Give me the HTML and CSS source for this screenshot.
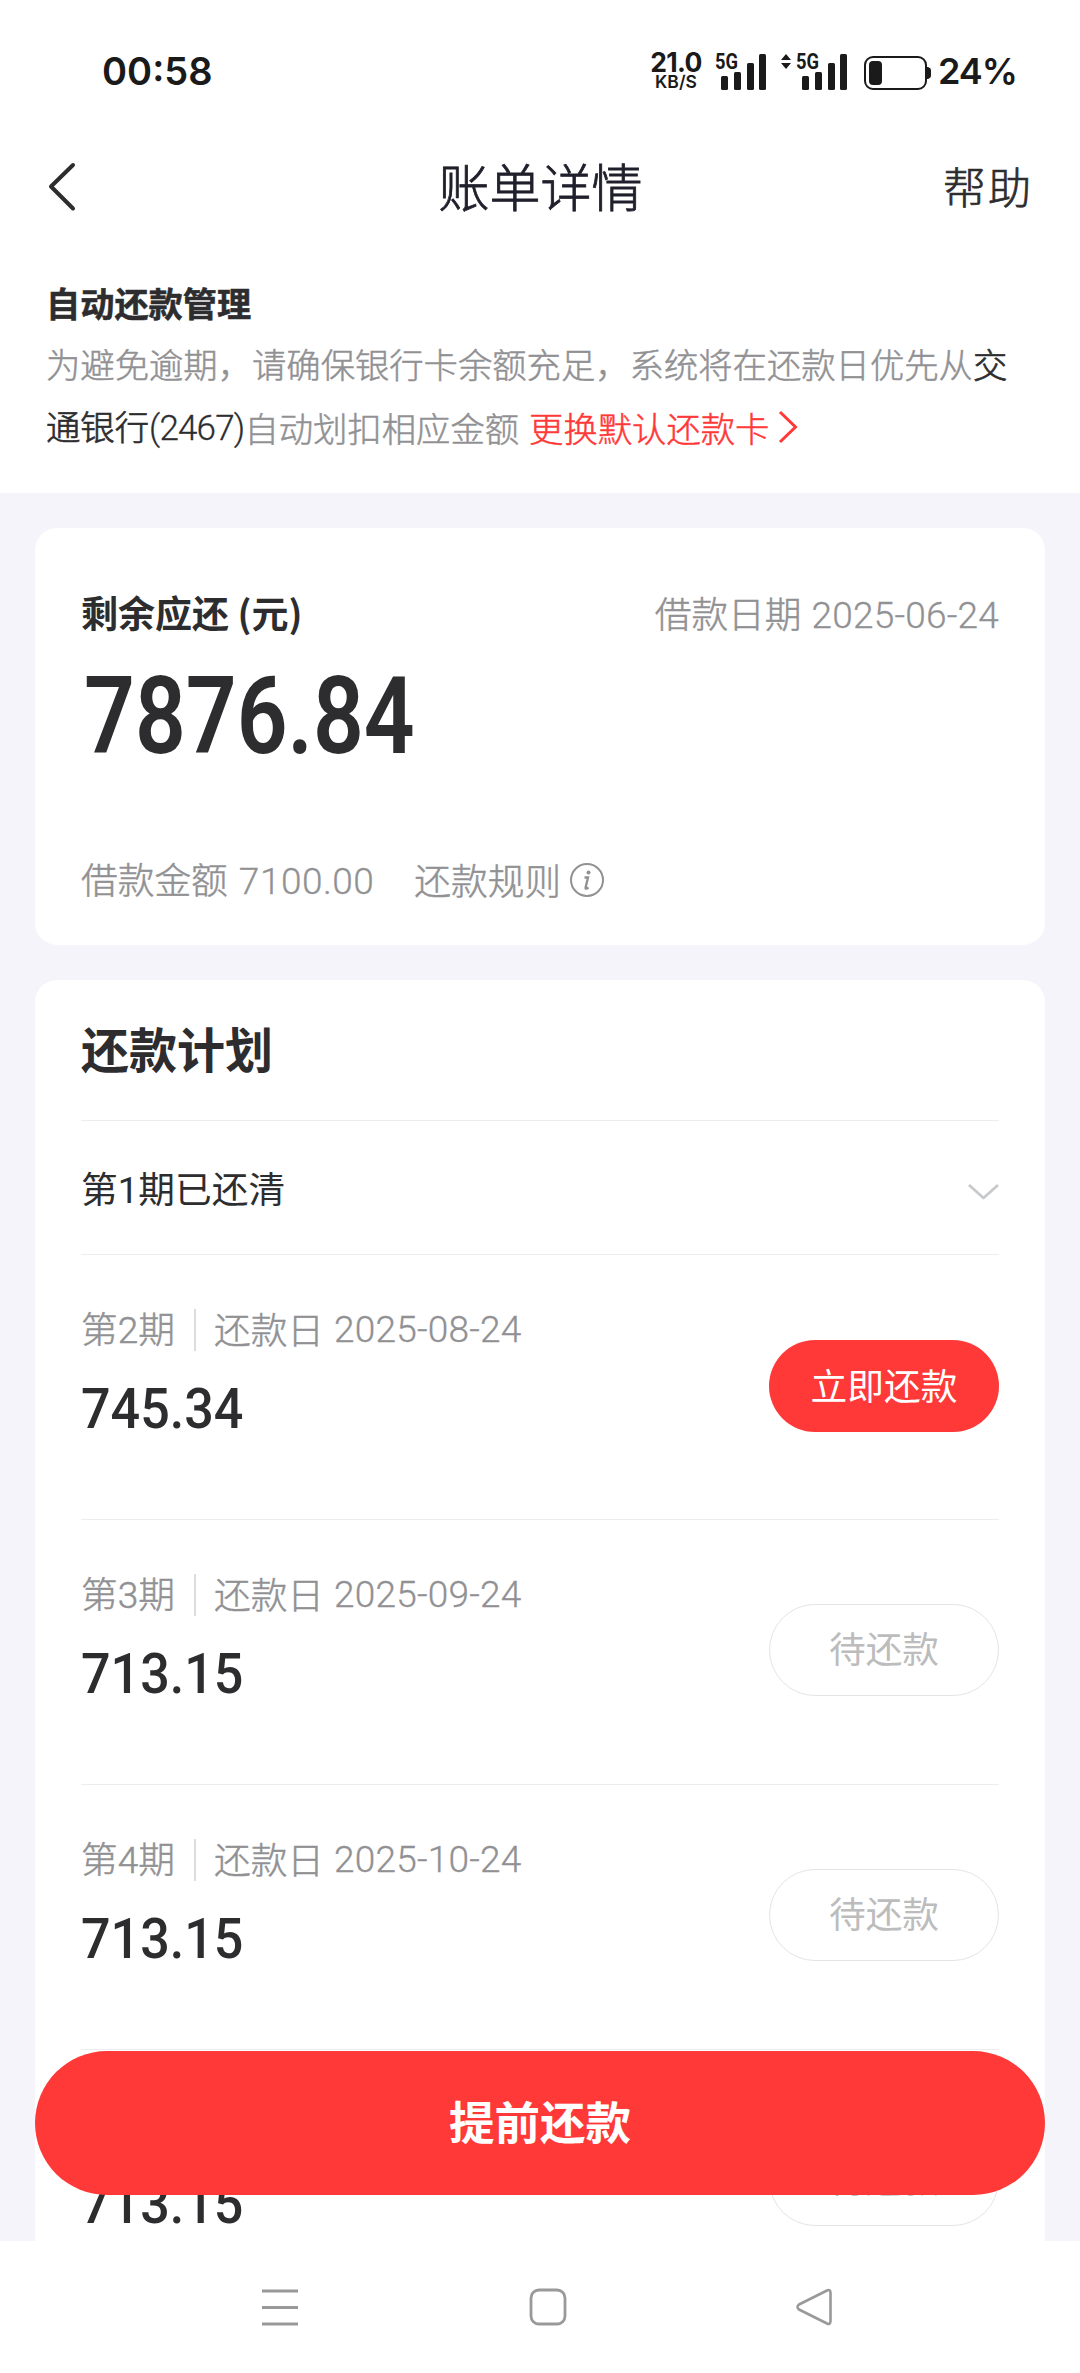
FILE: index.html
```html
<!DOCTYPE html>
<html lang="zh-CN">
<head>
	<meta charset="UTF-8">
	<meta name="viewport" content="width=device-width, initial-scale=1.0">
	<title>账单详情</title>
	<link rel="stylesheet" href="styles.css">
</head>
<body>
	<div class="page">
		<!-- 状态栏 -->
		<div class="status">
			<span class="time">00:58</span>
			<div class="status-right">
				<div class="speed">
					<span class="speed-num">21.0</span>
					<span class="speed-unit">KB/S</span>
				</div>
				<svg class="signal" width="52" height="40" viewBox="0 0 52 40">
					<text x="0" y="17.500" textLength="23" lengthAdjust="spacingAndGlyphs">5G</text>
					<rect x="6" y="25" width="7" height="14" rx="1.5"/>
					<rect x="19" y="21" width="7" height="18" rx="1.5"/>
					<rect x="32" y="12" width="7" height="27" rx="1.5"/>
					<rect x="44" y="3" width="7" height="36" rx="1.5"/>
				</svg>
				<svg class="signal signal2" width="67" height="40" viewBox="-15 0 67 40">
					<path d="M-15 9l5-6 5 6zM-15 12l5 6 5-6z"/>
					<text x="0" y="17.500" textLength="23" lengthAdjust="spacingAndGlyphs">5G</text>
					<rect x="6" y="25" width="7" height="14" rx="1.5"/>
					<rect x="19" y="21" width="7" height="18" rx="1.5"/>
					<rect x="32" y="12" width="7" height="27" rx="1.5"/>
					<rect x="44" y="3" width="7" height="36" rx="1.5"/>
				</svg>
				<svg class="battery" width="68" height="34" viewBox="0 0 68 34">
					<rect x="1" y="1" width="61" height="32" rx="8" fill="none" stroke="#1a1a1a" stroke-width="2"/>
					<rect x="5" y="5" width="13" height="24" rx="4"/>
					<path d="M62 11h2q3 1 3 3v6q0 2-3 3h-2z"/>
				</svg>
				<span class="percent">24%</span>
			</div>
		</div>

		<!-- 导航 -->
		<div class="nav">
			<a class="back" href="#">
				<svg width="28" height="50" viewBox="0 0 28 50"><path d="M25 3L3 24.500L25 46.500" fill="none" stroke="#2d2d2f" stroke-width="4" stroke-linecap="round" stroke-linejoin="round"/></svg>
			</a>
			<h1>账单详情</h1>
			<a class="help" href="#">帮助</a>
		</div>

		<!-- 自动还款 -->
		<div class="notice">
			<h2>自动还款管理</h2>
			<p>为避免逾期，请确保银行卡余额充足，系统将在还款日优先从<b>交</b></p>
			<p><b>通银行<span class="tail">(2467)</span></b>自动划扣相应金额<a class="change" href="#">更换默认还款卡<svg width="20" height="34" viewBox="0 0 20 34"><path d="M2 2L17.500 17L2 32" fill="none" stroke="#ff3838" stroke-width="3"/></svg></a></p>
		</div>

		<div class="main">
			<div class="card summary">
				<div class="summary-top">
					<span class="label">剩余应还 (元)</span>
					<span class="date">借款日期 <span class="num">2025-06-24</span></span>
				</div>
				<div class="total"><span>7876.84</span></div>
				<div class="summary-bottom">
					<span class="loan">借款金额 <span class="num">7100.00</span></span>
					<span class="rule">还款规则</span>
					<svg width="34" height="34" viewBox="0 0 34 34"><circle cx="17" cy="17" r="16" fill="none" stroke="#919194" stroke-width="2"/><circle cx="18.500" cy="9.500" r="2" fill="#919194"/><path d="M14.500 14.500h3.500l-2.500 10.500q0 1.500 3-.5" fill="none" stroke="#919194" stroke-width="2.300"/></svg>
				</div>
			</div>

			<div class="card plan">
				<h3>还款计划</h3>
				<div class="cleared">
					<span>第<i>1</i>期已还清</span>
					<svg width="32" height="18" viewBox="0 0 32 18"><path d="M2 2l14.500 13L31 2" fill="none" stroke="#c8c9cc" stroke-width="2.800" stroke-linejoin="round"/></svg>
				</div>
				<div class="item">
					<div class="info">
						<div class="term"><span class="no">第<i>2</i>期</span><span class="day">还款日</span><span class="num">2025-08-24</span></div>
						<div class="money">745.34</div>
					</div>
					<a class="btn pay" href="#">立即还款</a>
				</div>
				<div class="item">
					<div class="info">
						<div class="term"><span class="no">第<i>3</i>期</span><span class="day">还款日</span><span class="num">2025-09-24</span></div>
						<div class="money">713.15</div>
					</div>
					<a class="btn wait" href="#">待还款</a>
				</div>
				<div class="item">
					<div class="info">
						<div class="term"><span class="no">第<i>4</i>期</span><span class="day">还款日</span><span class="num">2025-10-24</span></div>
						<div class="money">713.15</div>
					</div>
					<a class="btn wait" href="#">待还款</a>
				</div>
				<div class="item">
					<div class="info">
						<div class="term"></div>
						<div class="money">713.15</div>
					</div>
					<a class="btn wait" href="#">待还款</a>
				</div>
			</div>
			<a class="prepay" href="#">提前还款</a>
		</div>

		<!-- 系统按键 -->
		<div class="keys">
			<svg width="36" height="38" viewBox="0 0 36 38"><path d="M0 3h36M0 19.500h36M0 36h36" stroke="#999" stroke-width="3"/></svg>
			<svg class="home" width="38" height="38" viewBox="0 0 38 38"><rect x="2" y="2" width="34" height="34" rx="8" fill="none" stroke="#999" stroke-width="2.800"/></svg>
			<svg width="38" height="38" viewBox="0 0 38 38"><path d="M32 2.500Q35.500 1 35.500 5V33Q35.500 37 32 35.500L4 21.500Q1 19 4 16.500Z" fill="none" stroke="#999" stroke-width="2.600" stroke-linejoin="round"/></svg>
		</div>
	</div>
</body>
</html>
```

FILE: styles.css
```css
*{
	padding: 0;
	margin: 0;
	box-sizing: border-box;
}
a{
	text-decoration: none;
	color: inherit;
}
i{
	font-style: normal;
}
svg{
	display: block;
	flex: none;
}
body{
	font-family: "Noto Sans CJK SC", sans-serif;
	color: #2d2d2f;
	background: #fff;
}
.page{
	width: 1080px;
	height: 2373px;
	display: flex;
	flex-direction: column;
	overflow: hidden;
	white-space: nowrap;
}
/* 状态栏 */
.status{
	height: 142px;
	padding: 0 66px 0 102px;
	display: flex;
	justify-content: space-between;
	align-items: center;
	font-family: Inter, sans-serif;
	font-weight: 600;
	color: #1a1a1a;
	fill: #1a1a1a;
}
.time{
	font-size: 38px;
}
.status-right{
	display: flex;
	align-items: center;
}
.speed{
	width: 52px;
	margin-right: 13px;
	display: flex;
	flex-direction: column;
	align-items: center;
}
.speed-num{
	font-size: 26.5px;
	font-weight: 700;
	line-height: 20px;
	letter-spacing: -0.7px;
}
.speed-unit{
	font-size: 17.5px;
	line-height: 19px;
}
.signal{
	overflow: visible;
}
.signal text{
	font-family: Roboto, sans-serif;
	font-size: 22px;
	font-weight: 700;
}
.signal2{
	margin-left: 14px;
}
.battery{
	margin: 3px 6px 0 16px;
}
.percent{
	width: 76px;
	font-size: 36px;
	letter-spacing: -1px;
}
/* 导航 */
.nav{
	height: 92px;
	padding: 0 47px 3px 48px;
	display: grid;
	grid-template-columns: 1fr auto 1fr;
	align-items: center;
}
h1{
	font-size: 51px;
	font-weight: 300;
	line-height: 86px;
	padding-bottom: 3px;
	color: #20202c;
	-webkit-text-stroke: 0.8px;
}
.help{
	justify-self: end;
	font-size: 43px;
	font-weight: 300;
	line-height: 86px;
	padding-bottom: 3px;
	letter-spacing: 2px;
	-webkit-text-stroke: 0.7px;
}
/* 自动还款 */
.notice{
	height: 259px;
	padding: 43px 46px 0;
	font-size: 34.35px;
	line-height: 62px;
	color: #919194;
	font-weight: 300;
	-webkit-text-stroke: 0.5px;
}
.notice h2{
	font-size: 34.2px;
	line-height: 50px;
	margin-bottom: 5px;
	color: #2d2d2f;
}
.notice p{
	display: flex;
	align-items: center;
}
.notice b{
	font-weight: 300;
	color: #2d2d2f;
	-webkit-text-stroke: 0.7px;
}
.tail{
	font-family: Roboto, sans-serif;
	font-weight: 300;
	font-size: 35px;
	letter-spacing: -0.8px;
	-webkit-text-stroke: 0.3px;
}
.change{
	display: flex;
	align-items: center;
	gap: 9px;
	margin-left: 10px;
	color: #ff3838;
}
/* 内容 */
.main{
	height: 1748px;
	padding: 35px 35px 0;
	position: relative;
	overflow: hidden;
	background: #f4f4fa;
}
.card{
	background: #fff;
	border-radius: 22px;
	padding: 0 46px;
}
.summary{
	height: 417px;
	margin-bottom: 35px;
	padding-top: 60px;
}
.summary-top{
	height: 50px;
	display: flex;
	justify-content: space-between;
	align-items: center;
}
.label{
	font-size: 37px;
	font-weight: 700;
	line-height: 50px;
	padding-bottom: 3px;
}
.date,.summary-bottom,.term{
	font-size: 36.7px;
	font-weight: 300;
	line-height: 50px;
	color: #919194;
	-webkit-text-stroke: 0.5px;
}
.date{
	padding-top: 2px;
}
.num,.no i{
	font-family: Roboto, sans-serif;
	font-size: 37px;
	font-weight: 300;
}
.num{
	letter-spacing: 0.2px;
	-webkit-text-stroke: 0.3px;
}
.date .num{
	margin-left: 2px;
}
.loan .num{
	margin-left: 3px;
	letter-spacing: 0.5px;
}
.total{
	height: 152px;
	padding-left: 3px;
	font-family: Roboto, sans-serif;
	font-size: 108px;
	font-weight: 600;
	line-height: 156px;
}
.total span{
	display: inline-block;
	transform: scaleX(.825);
	transform-origin: left;
}
.summary-bottom{
	margin-top: 63px;
	display: flex;
	align-items: center;
}
.rule{
	margin: 0 9px 0 40px;
	padding-bottom: 2px;
}
/* 还款计划 */
h3{
	height: 141px;
	font-size: 48px;
	line-height: 134px;
	border-bottom: 1px solid #ededed;
}
.cleared{
	height: 134px;
	display: flex;
	justify-content: space-between;
	align-items: center;
	font-size: 36.7px;
	border-bottom: 1px solid #ededed;
}
.cleared span{
	padding-bottom: 2px;
}
.cleared svg{
	margin-top: 8px;
}
.cleared i{
	font-family: Roboto, sans-serif;
}
.item{
	height: 265px;
	padding-top: 50px;
	display: flex;
	justify-content: space-between;
	align-items: flex-start;
	border-bottom: 1px solid #ededed;
}
.term{
	height: 50px;
	display: flex;
	align-items: center;
}
.no{
	height: 42px;
	line-height: 37px;
	padding-right: 19px;
	margin-right: 18px;
	border-right: 2px solid #dcdcdc;
}
.day{
	margin-right: 10px;
	padding-bottom: 5px;
}
.money{
	font-family: Roboto, sans-serif;
	font-size: 56px;
	font-weight: 500;
	line-height: 56px;
	margin-top: 26px;
	transform: scaleX(.93);
	transform-origin: left;
}
.btn{
	width: 230px;
	height: 92px;
	margin-top: 35px;
	border-radius: 46px;
	text-align: center;
	font-size: 36.7px;
	font-weight: 400;
	line-height: 88px;
}
.wait{
	margin-top: 34px;
	line-height: 84px;
	border: 1px solid #e4e4e4;
	color: #bcbcbc;
}
.pay{
	background: #ff3838;
	color: #fff;
}
/* 悬浮在列表上的按钮 */
.prepay{
	position: absolute;
	left: 35px;
	right: 35px;
	bottom: 46px;
	height: 144px;
	border-radius: 72px;
	background: #ff3838;
	color: #fff;
	text-align: center;
	font-size: 45.5px;
	font-weight: 700;
	line-height: 139px;
}
/* 系统按键 */
.keys{
	height: 132px;
	padding: 0 247px 0 262px;
	display: flex;
	justify-content: space-between;
	align-items: center;
}
.home{
	margin-left: 2px;
}
```
